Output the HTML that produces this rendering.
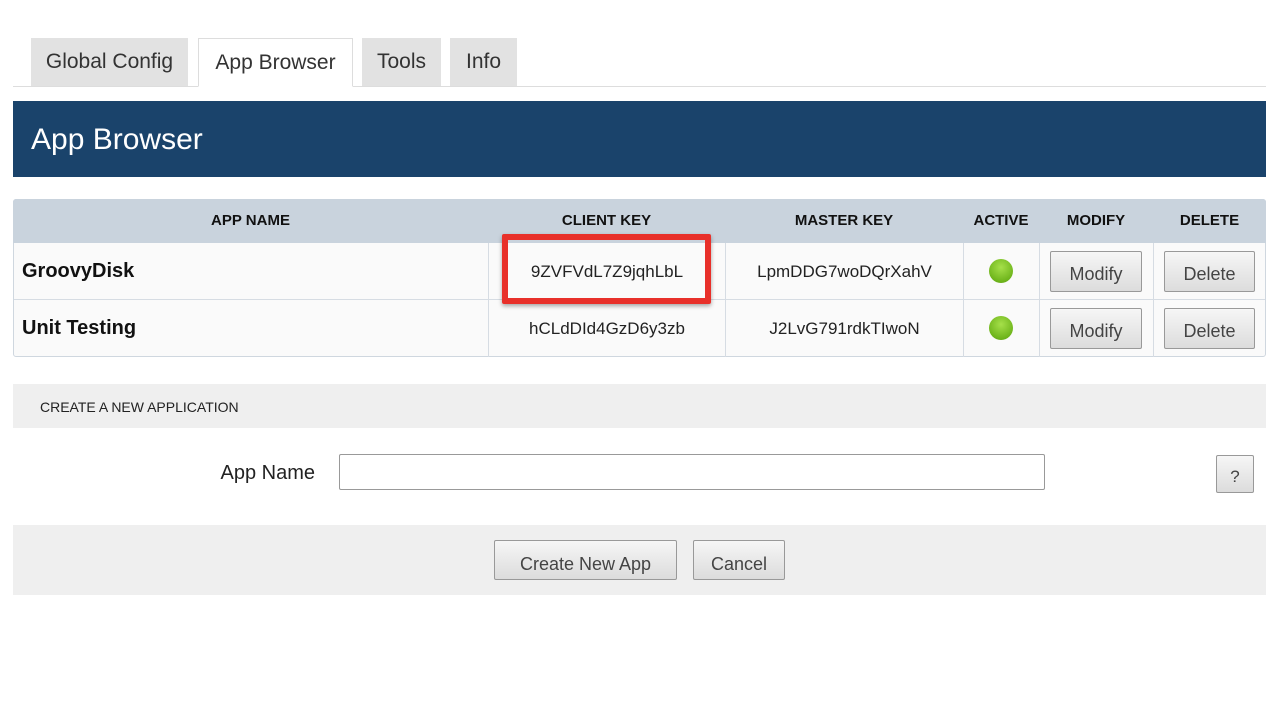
<!DOCTYPE html>
<html><head><meta charset="utf-8"><style>
*{margin:0;padding:0;box-sizing:border-box}
body{width:1280px;height:711px;background:#fff;font-family:"Liberation Sans",sans-serif;position:relative;overflow:hidden;color:#222}
.a{position:absolute}
.tab{position:absolute;top:38px;height:48px;background:#e2e2e2;font-size:21px;color:#333;text-align:center;line-height:46px;border:1px solid #e2e2e2;border-bottom:none}
.tab.on{background:#fff;border:1px solid #ddd;border-bottom:1px solid #fff;height:49px;line-height:48px}
.th{position:absolute;top:199px;height:44px;line-height:44px;font-size:15px;font-weight:bold;text-align:center;color:#111}
.cell{position:absolute;height:57px;line-height:58px;font-size:17px;text-align:center;color:#222;border-left:1px solid #d6dce3}
.btn{position:absolute;border:1px solid #999;border-radius:2px;background:linear-gradient(#f6f6f6,#dcdcdc);font-size:18px;color:#444;text-align:center}
.dot{position:absolute;width:24px;height:24px;border-radius:50%;background:radial-gradient(circle at 50% 35%,#a6e04a,#6fb51c 70%,#5a9a14);}
</style></head><body>
<div class="a" style="left:13px;top:86px;width:1253px;height:1px;background:#ddd"></div>
<div class="tab" style="left:31px;width:157px">Global Config</div>
<div class="tab on" style="left:198px;width:155px">App Browser</div>
<div class="tab" style="left:362px;width:79px">Tools</div>
<div class="tab" style="left:450px;width:67px">Info</div>

<div class="a" style="left:13px;top:101px;width:1253px;height:76px;background:#1a436b;color:#fff;font-size:30px;line-height:78px;padding-left:18px">App Browser</div>

<div class="a" style="left:13px;top:199px;width:1253px;height:158px;border:1px solid #cfd7df;border-radius:3px;background:#fafafa"></div>
<div class="a" style="left:13px;top:199px;width:1253px;height:44px;background:#c9d3dd;border-radius:3px 3px 0 0"></div>
<div class="a" style="left:14px;top:299px;width:1251px;height:1px;background:#d6dce3"></div>
<div class="th" style="left:13px;width:475px">APP NAME</div>
<div class="th" style="left:488px;width:237px">CLIENT KEY</div>
<div class="th" style="left:725px;width:238px">MASTER KEY</div>
<div class="th" style="left:963px;width:76px">ACTIVE</div>
<div class="th" style="left:1039px;width:114px">MODIFY</div>
<div class="th" style="left:1153px;width:113px">DELETE</div>

<div class="cell" style="left:13px;top:243px;width:475px;text-align:left;padding-left:9px;font-weight:bold;font-size:20px;color:#111;border:none;line-height:56px">GroovyDisk</div>
<div class="cell" style="left:488px;top:243px;width:237px">9ZVFVdL7Z9jqhLbL</div>
<div class="cell" style="left:725px;top:243px;width:238px">LpmDDG7woDQrXahV</div>
<div class="cell" style="left:963px;top:243px;width:76px"></div>
<div class="cell" style="left:1039px;top:243px;width:114px"></div>
<div class="cell" style="left:1153px;top:243px;width:113px"></div>
<div class="cell" style="left:13px;top:300px;width:475px;text-align:left;padding-left:9px;font-weight:bold;font-size:20px;color:#111;border:none;line-height:56px">Unit Testing</div>
<div class="cell" style="left:488px;top:300px;width:237px">hCLdDId4GzD6y3zb</div>
<div class="cell" style="left:725px;top:300px;width:238px">J2LvG791rdkTIwoN</div>
<div class="cell" style="left:963px;top:300px;width:76px"></div>
<div class="cell" style="left:1039px;top:300px;width:114px"></div>
<div class="cell" style="left:1153px;top:300px;width:113px"></div>

<div class="dot" style="left:989px;top:259px"></div>
<div class="dot" style="left:989px;top:316px"></div>
<div class="btn" style="left:1050px;top:251px;width:92px;height:41px;line-height:45px">Modify</div>
<div class="btn" style="left:1164px;top:251px;width:91px;height:41px;line-height:45px">Delete</div>
<div class="btn" style="left:1050px;top:308px;width:92px;height:41px;line-height:45px">Modify</div>
<div class="btn" style="left:1164px;top:308px;width:91px;height:41px;line-height:45px">Delete</div>

<div class="a" style="left:502px;top:234px;width:209px;height:70px;border:6px solid #e8302a;border-radius:2px;box-shadow:0 2px 4px rgba(0,0,0,.35)"></div>

<div class="a" style="left:13px;top:384px;width:1253px;height:44px;background:#efefef;font-size:14px;line-height:46px;padding-left:27px;color:#222">CREATE A NEW APPLICATION</div>
<div class="a" style="left:160px;top:458px;width:155px;text-align:right;font-size:20px;line-height:30px;color:#222">App Name</div>
<div class="a" style="left:339px;top:454px;width:706px;height:36px;border:1px solid #999;border-radius:2px;background:#fff"></div>
<div class="btn" style="left:1216px;top:455px;width:38px;height:38px;line-height:42px;font-size:17px">?</div>

<div class="a" style="left:13px;top:525px;width:1253px;height:70px;background:#efefef"></div>
<div class="btn" style="left:494px;top:540px;width:183px;height:40px;line-height:46px">Create New App</div>
<div class="btn" style="left:693px;top:540px;width:92px;height:40px;line-height:46px">Cancel</div>
</body></html>
